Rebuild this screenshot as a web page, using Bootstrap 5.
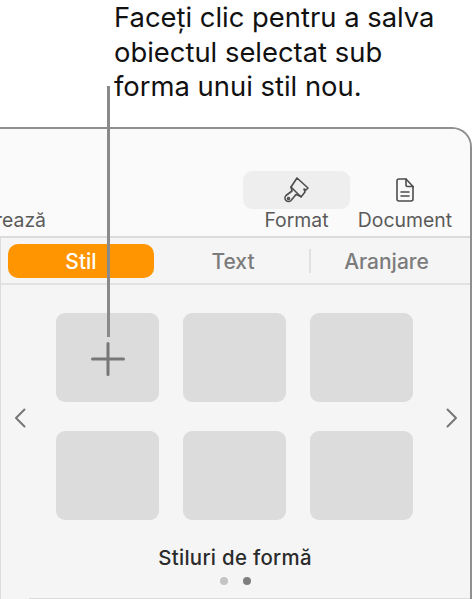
<!DOCTYPE html>
<html lang="en">
<head>
    <meta charset="UTF-8">
    <meta name="viewport" content="width=device-width, initial-scale=1.0">
    <title>Stiluri de forma</title>
    <link href="https://cdn.jsdelivr.net/npm/bootstrap@5.3.0/dist/css/bootstrap.min.css" rel="stylesheet">
    <style>
        html, body { height: 100%; overflow: hidden; background: #fff; }
        body { font-family: Inter, "Liberation Sans", sans-serif; position: relative; }
        .callout { height: 127px; padding: 0 0 0 114px; font-size: 27.4px; line-height: 34.5px; color: #111; }
        .panel-box { height: 472px; width: 472px; border: 2px solid #8f8f8f; border-width: 2px 2px 0 0; border-top-right-radius: 20px; background: #f5f5f5; overflow: hidden; }
        .top-bar { height: 109px; background: #fafafa; border-bottom: 2px solid #dcdcdc; padding: 42px 11px 0 0; font-size: 19.4px; color: #5a5a5a; }
        .tool-item { text-align: center; }
        .tool-format { width: 107px; margin-right: 1px; }
        .tool-doc { width: 108px; }
        .tool-icon { height: 38px; border-radius: 9px; }
        .tool-icon.is-on { background: #eeeeee; }
        .tool-label { line-height: 22px; white-space: nowrap; }
        .cut-label { width: 46px; margin-right: 197px; overflow: hidden; direction: rtl; }
        .tab-bar { height: 47px; padding: 6px 8px; border-bottom: 2px solid #e2e2e2; font-size: 21px; font-weight: 500; color: #7c7c7c; }
        .tab-pill { width: 146px; height: 34px; padding-top: 2px; border-radius: 10px; background: #ff9500; color: #fff; }
        .tab-plain { height: 34px; padding-top: 2px; }
        .tab-text { width: 156px; padding-left: 2px; }
        .tab-sep { width: 2px; height: 24px; margin-left: -1px; background: #e0e0e0; }
        .style-area { position: relative; height: 314px; }
        .style-grid { display: grid; grid-template-columns: repeat(3, 103px); grid-auto-rows: 89px; column-gap: 24px; row-gap: 29px; padding: 28px 0 0 56px; }
        .style-cell { background: #dcdcdc; border-radius: 9px; }
        .plus-mark { margin-top: 2px; }
        .nav-arrow { position: absolute; top: 123px; }
        .arrow-left { left: 13px; }
        .arrow-right { left: 445px; }
        .shape-title { font-size: 20.4px; font-weight: 500; color: #2b2b2b; text-align: center; margin-top: 26px; line-height: 24px; letter-spacing: .3px; }
        .page-dots { gap: 15px; margin-top: 7px; }
        .page-dot { width: 8px; height: 8px; border-radius: 50%; background: #c4c4c4; }
        .page-dot.is-on { background: #7f7f7f; }
        .leader { position: absolute; left: 107px; top: 86px; width: 3px; height: 251px; background: #8a8a8a; }
        .left-rule { position: absolute; left: 0; top: 238px; bottom: 0; width: 1px; background: #dcdcdc; }
        .bottom-rule { position: absolute; left: 29px; right: 3px; bottom: 0; height: 1px; background: #dcdcdc; }
    </style>
</head>
<body>
    <div class="callout">Faceți clic pentru a salva<br>obiectul selectat sub<br>forma unui stil nou.</div>

    <div class="panel-box">
        <div class="top-bar d-flex justify-content-end">
            <div class="tool-item cut-label"><div class="tool-icon"></div><div class="tool-label">rează</div></div>
            <div class="tool-item tool-format">
                <div class="tool-icon is-on d-flex align-items-center justify-content-center">
                    <svg width="30" height="30" viewBox="0 0 30 30" fill="none" stroke="#4d4d4d" stroke-width="1.6" stroke-linejoin="round" stroke-linecap="round">
                        <path d="M9 12L15 3l11 10-2 2-2-1 1 3-4 5z"/>
                        <path d="M9 12l1 4-6 4.5a3.4 3.4 0 0 0 5 5l5-6 5 2"/>
                        <circle cx="6.5" cy="23.5" r="1"/>
                    </svg>
                </div>
                <div class="tool-label">Format</div>
            </div>
            <div class="tool-item tool-doc">
                <div class="tool-icon d-flex align-items-center justify-content-center">
                    <svg width="22" height="26" viewBox="0 0 22 26" fill="none" stroke="#4d4d4d" stroke-width="1.6" stroke-linejoin="round" stroke-linecap="round">
                        <path d="M5 2h7l7 7.5V22a2 2 0 0 1-2 2H5a2 2 0 0 1-2-2V4a2 2 0 0 1 2-2z"/>
                        <path d="M12 2v6a1.5 1.5 0 0 0 1.5 1.5H19M7 15h8M7 19h8"/>
                    </svg>
                </div>
                <div class="tool-label">Document</div>
            </div>
        </div>

        <div class="tab-bar d-flex align-items-center">
            <div class="tab-pill d-flex align-items-center justify-content-center">Stil</div>
            <div class="tab-plain tab-text d-flex align-items-center justify-content-center">Text</div>
            <div class="tab-sep"></div>
            <div class="tab-plain flex-grow-1 d-flex align-items-center justify-content-center">Aranjare</div>
        </div>

        <div class="style-area">
            <div class="style-grid">
                <div class="style-cell d-flex align-items-center justify-content-center">
                    <svg class="plus-mark" width="36" height="36" viewBox="0 0 36 36" stroke="#777" stroke-width="3" stroke-linecap="round"><path d="M18 2.5v31M2.5 18h31"/></svg>
                </div>
                <div class="style-cell"></div>
                <div class="style-cell"></div>
                <div class="style-cell"></div>
                <div class="style-cell"></div>
                <div class="style-cell"></div>
            </div>
            <svg class="nav-arrow arrow-left" width="14" height="20" viewBox="0 0 14 20" fill="none" stroke="#777" stroke-width="2" stroke-linecap="round" stroke-linejoin="round"><path d="M11.5 1.5L3 10l8.5 8.5"/></svg>
            <svg class="nav-arrow arrow-right" width="14" height="20" viewBox="0 0 14 20" fill="none" stroke="#777" stroke-width="2" stroke-linecap="round" stroke-linejoin="round"><path d="M2.5 1.5L11 10l-8.5 8.5"/></svg>
            <div class="shape-title">Stiluri de formă</div>
            <div class="page-dots d-flex justify-content-center">
                <div class="page-dot"></div>
                <div class="page-dot is-on"></div>
            </div>
        </div>
    </div>

    <div class="left-rule"></div>
    <div class="bottom-rule"></div>
    <div class="leader"></div>
    <script src="https://cdn.jsdelivr.net/npm/bootstrap@5.3.0/dist/js/bootstrap.bundle.min.js"></script>
</body>
</html>
